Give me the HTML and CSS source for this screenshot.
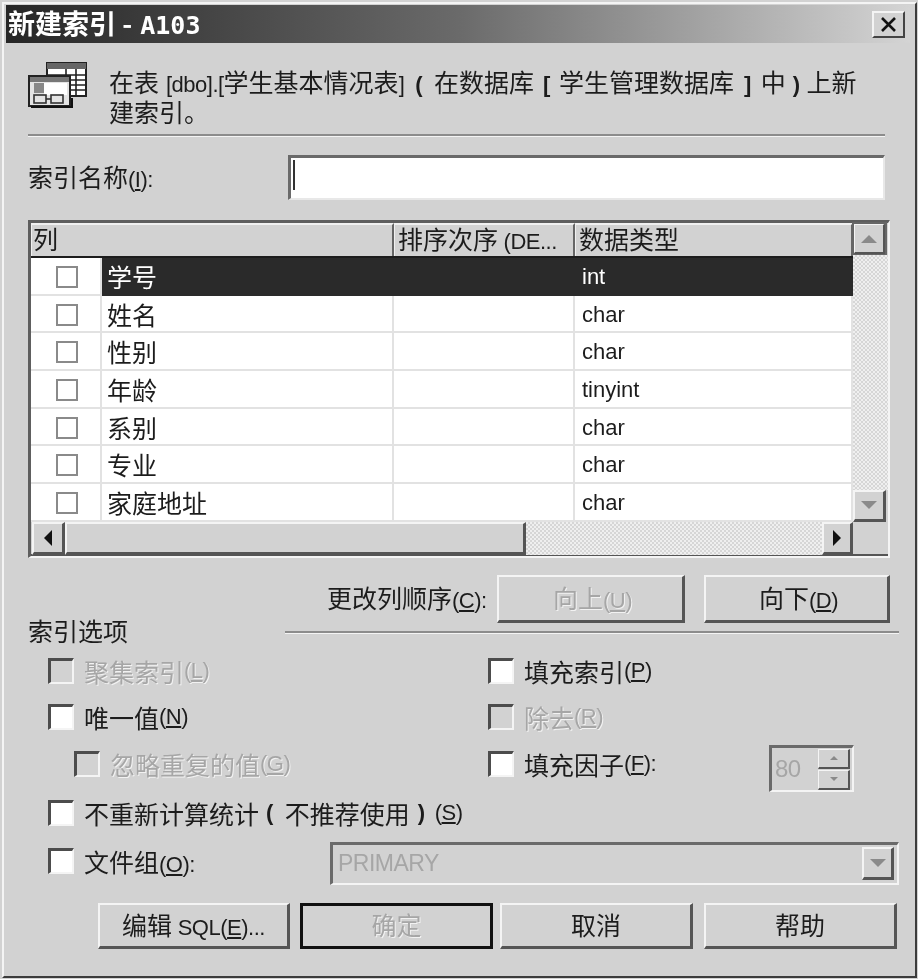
FILE: index.html
```html
<!DOCTYPE html>
<html lang="zh-CN">
<head>
  <meta charset="UTF-8">
  <title>新建索引 - A103</title>
  <link rel="stylesheet" href="styles.css">
</head>
<body>
  <div class="dialog">
    <div class="titlebar">
      <span class="title">新建索引 - <span class="title-mono">A103</span></span>
      <button class="close-btn" aria-label="关闭">
        <svg width="17" height="15" viewBox="0 0 17 15"><path d="M2 1 L15 14 M15 1 L2 14" stroke="#111" stroke-width="2.6" fill="none"/></svg>
      </button>
    </div>

    <div class="content">
      <div class="header">
        <svg class="header-icon" width="60" height="46" viewBox="0 0 60 46">
          <rect x="19" y="1" width="39" height="33" fill="#fff" stroke="#222" stroke-width="2"/>
          <rect x="19" y="1" width="39" height="6" fill="#666"/>
          <path d="M20 13H58M20 18H58M20 23H58M20 28H58M38 7V33M48 7V33" stroke="#222" stroke-width="1.6" fill="none"/>
          <rect x="1" y="14" width="41" height="30" fill="#e4e4e4" stroke="#222" stroke-width="2"/>
          <rect x="2" y="15" width="39" height="5" fill="#777"/>
          <rect x="6" y="21" width="10" height="10" fill="#888"/>
          <rect x="16" y="21" width="23" height="12" fill="#fff"/>
          <rect x="6" y="33" width="12" height="8" fill="none" stroke="#333" stroke-width="1.6"/>
          <rect x="23" y="33" width="12" height="8" fill="none" stroke="#333" stroke-width="1.6"/>
          <path d="M18 37H23" stroke="#333" stroke-width="1.6"/>
          <path d="M3 45H44V36" stroke="#111" stroke-width="2" fill="none"/>
        </svg>
        <p class="header-text">在表 <span class="lt">[dbo].[</span>学生基本情况表<span class="lt">]</span><span class="lt pn pn-a">(</span>在数据库<span class="lt pn pn-b">[</span>学生管理数据库<span class="lt pn pn-c">]</span>中<span class="lt pn pn-d">)</span>上新<br>建索引。</p>
      </div>
      <div class="divider"></div>

      <div class="name-row">
        <label class="name-label">索引名称<span class="lt">(<u>I</u>):</span></label>
        <div class="name-input"><span class="caret"></span></div>
      </div>

      <div class="grid-frame">
        <div class="grid-inner">
          <div class="grid-main">
            <div class="table">
              <div class="table-head">
                <div class="th th-wide">列</div>
                <div class="th">排序次序 <span class="lt">(DE...</span></div>
                <div class="th">数据类型</div>
              </div>
              <div class="table-row selected">
                <div class="td td-check"><span class="cell-box"></span></div>
                <div class="td">学号</div>
                <div class="td"></div>
                <div class="td lt">int</div>
              </div>
              <div class="table-row">
                <div class="td td-check"><span class="cell-box"></span></div>
                <div class="td">姓名</div>
                <div class="td"></div>
                <div class="td lt">char</div>
              </div>
              <div class="table-row">
                <div class="td td-check"><span class="cell-box"></span></div>
                <div class="td">性别</div>
                <div class="td"></div>
                <div class="td lt">char</div>
              </div>
              <div class="table-row">
                <div class="td td-check"><span class="cell-box"></span></div>
                <div class="td">年龄</div>
                <div class="td"></div>
                <div class="td lt">tinyint</div>
              </div>
              <div class="table-row">
                <div class="td td-check"><span class="cell-box"></span></div>
                <div class="td">系别</div>
                <div class="td"></div>
                <div class="td lt">char</div>
              </div>
              <div class="table-row">
                <div class="td td-check"><span class="cell-box"></span></div>
                <div class="td">专业</div>
                <div class="td"></div>
                <div class="td lt">char</div>
              </div>
              <div class="table-row">
                <div class="td td-check"><span class="cell-box"></span></div>
                <div class="td">家庭地址</div>
                <div class="td"></div>
                <div class="td lt">char</div>
              </div>
            </div>
            <div class="vscroll">
              <div class="scroll-btn scroll-up"><span class="arrow arrow-up arrow-off"></span></div>
              <div class="scroll-track"></div>
              <div class="scroll-btn scroll-down"><span class="arrow arrow-down arrow-off"></span></div>
            </div>
          </div>
          <div class="hscroll">
            <div class="scroll-btn scroll-left"><span class="arrow arrow-left"></span></div>
            <div class="scroll-thumb"></div>
            <div class="scroll-track"></div>
            <div class="scroll-btn scroll-right"><span class="arrow arrow-right"></span></div>
          </div>
        </div>
      </div>

      <div class="order-row">
        <span class="order-label">更改列顺序<span class="lt">(<u>C</u>):</span></span>
        <button class="btn btn-order disabled">向上<span class="lt">(<u>U</u>)</span></button>
        <button class="btn btn-order btn-down">向下<span class="lt">(<u>D</u>)</span></button>
      </div>

      <div class="legend">
        <span class="legend-text">索引选项</span>
        <div class="legend-line"></div>
      </div>

      <div class="options">
        <div class="opt disabled"><span class="check"></span>聚集索引<span class="lt">(<u>L</u>)</span></div>
        <div class="opt opt-right"><span class="check on"></span>填充索引<span class="lt">(<u>P</u>)</span></div>

        <div class="opt"><span class="check on"></span>唯一值<span class="lt">(<u>N</u>)</span></div>
        <div class="opt opt-right disabled"><span class="check"></span>除去<span class="lt">(<u>R</u>)</span></div>

        <div class="opt opt-sub disabled"><span class="check"></span>忽略重复的值<span class="lt">(<u>G</u>)</span></div>
        <div class="opt opt-right">
          <span class="check on"></span>填充因子<span class="lt">(<u>F</u>):</span>
          <div class="spinner">
            <span class="spinner-value lt">80</span>
            <div class="spinner-btns">
              <div class="spin-btn"><span class="arrow arrow-up arrow-tiny"></span></div>
              <div class="spin-btn"><span class="arrow arrow-down arrow-tiny"></span></div>
            </div>
          </div>
        </div>

        <div class="opt opt-full"><span class="check on"></span>不重新计算统计<span class="lt pn pn-e">(</span>不推荐使用<span class="lt pn pn-f">)</span><span class="lt">(<u>S</u>)</span></div>

        <div class="opt opt-full">
          <span class="check on"></span><span class="group-label">文件组<span class="lt">(<u>O</u>):</span></span>
          <div class="select">
            <span class="select-value lt">PRIMARY</span>
            <div class="scroll-btn select-btn"><span class="arrow arrow-down arrow-off"></span></div>
          </div>
        </div>
      </div>

      <div class="footer">
        <button class="btn btn-sql">编辑 <span class="lt">SQL(<u>E</u>)...</span></button>
        <button class="btn btn-ok disabled">确定</button>
        <button class="btn btn-cancel">取消</button>
        <button class="btn btn-help">帮助</button>
      </div>
    </div>
  </div>
</body>
</html>
```

FILE: styles.css
```css
/* Base styles */
* {
  margin: 0;
  padding: 0;
  box-sizing: border-box;
  font-family: "Noto Sans CJK SC", "Liberation Sans", sans-serif;
}

html, body {
  width: 918px;
  height: 979px;
  overflow: hidden;
}

body {
  background-color: #d2d2d2;
  color: #1c1c1c;
  font-size: 25px;
  padding: 2px 1px 1px 2px;
}

.lt {
  font-family: "Liberation Sans", sans-serif;
  font-size: 22px;
  letter-spacing: -0.5px;
}

u {
  font-family: "Liberation Sans", sans-serif;
}

/* Bold narrow brackets in running text */
.pn {
  font-weight: 700;
}

.pn-a {
  padding: 0 12px 0 11px;
}

.pn-b {
  padding: 0 9px;
}

.pn-c {
  padding: 0 10px;
}

.pn-d {
  padding: 0 7px;
}

.pn-e {
  padding: 0 12px 0 7px;
}

.pn-f {
  padding: 0 10px 0 8px;
}

/* Window */
.dialog {
  height: 976px;
  padding: 1px 5px 0 2px;
  background-color: #d2d2d2;
  border-style: solid;
  border-width: 2px;
  border-color: #f4f4f4 #3c3c3c #3c3c3c #f4f4f4;
  filter: blur(0.45px);
}

.titlebar {
  display: flex;
  align-items: center;
  height: 38px;
  padding: 0 5px 0 2px;
  background: linear-gradient(to right, #262626 0%, #6a6a6a 50%, #d4d4d4 100%);
}

.title {
  color: #fff;
  font-size: 27px;
  font-weight: 700;
  line-height: 38px;
  white-space: nowrap;
}

.title-mono {
  margin-left: 2px;
  font-family: "DejaVu Sans Mono", monospace;
  font-size: 25px;
  font-weight: 700;
}

.close-btn {
  display: flex;
  align-items: center;
  justify-content: center;
  width: 33px;
  height: 27px;
  margin-left: auto;
  background-color: #d2d2d2;
  border-style: solid;
  border-width: 2px;
  border-color: #f4f4f4 #444 #444 #f4f4f4;
}

.content {
  padding: 19px 11px 0 22px;
}

/* Header */
.header {
  display: flex;
  height: 72px;
}

.header-icon {
  flex: none;
  margin-right: 21px;
}

.header-text {
  padding-top: 7px;
  font-family: "Liberation Sans", "Noto Sans CJK SC", sans-serif;
  line-height: 28px;
  white-space: nowrap;
}

.divider {
  width: 857px;
  height: 2px;
  background-color: #8c8c8c;
  box-shadow: 0 1px 0 #f4f4f4;
}

.name-row {
  display: flex;
  align-items: center;
  height: 45px;
  margin-top: 19px;
}

.name-label {
  width: 260px;
  padding-bottom: 4px;
}

.name-input {
  width: 597px;
  height: 45px;
  padding: 2px;
  background-color: #fff;
  border-style: solid;
  border-width: 3px 2px 2px 3px;
  border-color: #6a6a6a #e8e8e8 #e8e8e8 #6a6a6a;
}

.caret {
  display: block;
  width: 2px;
  height: 30px;
  background-color: #333;
}

/* Column grid */
.grid-frame {
  width: 862px;
  height: 338px;
  margin-top: 20px;
  border-style: solid;
  border-width: 3px 2px 2px 3px;
  border-color: #5e5e5e #f4f4f4 #f4f4f4 #5e5e5e;
}

.grid-inner {
  height: 100%;
  border-bottom: 2px solid #555;
}

.grid-main {
  display: flex;
}

.table {
  width: 822px;
  background-color: #fff;
}

.table-head {
  display: grid;
  grid-template-columns: 363px 181px 278px;
  height: 35px;
  background-color: #d2d2d2;
  border-bottom: 2px solid #1c1c1c;
}

.th {
  padding-left: 3px;
  line-height: 26px;
  white-space: nowrap;
  border-style: solid;
  border-width: 2px 2px 0 1px;
  border-color: #f0f0f0 #666 transparent #f0f0f0;
}

.th-wide {
  padding-left: 1px;
}

.table-row {
  display: grid;
  grid-template-columns: 71px 292px 181px 278px;
  grid-template-rows: 37.7px;
  height: 37.7px;
}

.td {
  padding-left: 5px;
  line-height: 36px;
  border-right: 2px solid #e2e2e2;
  border-bottom: 2px solid #e2e2e2;
}

.td.lt {
  padding-left: 7px;
  letter-spacing: 0;
  line-height: 37px;
}

.td-check {
  display: flex;
  align-items: center;
  justify-content: center;
  padding-left: 0;
}

.cell-box {
  width: 22px;
  height: 22px;
  margin: 2px 0 0 2px;
  background-color: #fff;
  border: 2px solid #8a8a8a;
}

.selected .td {
  color: #fff;
  background-color: #2a2a2a;
  border-color: #2a2a2a;
}

.selected .td-check {
  background-color: #fff;
  border-color: #e2e2e2;
}

/* Scrollbars */
.vscroll {
  display: flex;
  flex-direction: column;
  width: 35px;
}

.scroll-track {
  flex: 1;
  background-color: #efefef;
  background-image: conic-gradient(#d6d6d6 25%, transparent 0 50%, #d6d6d6 0 75%, transparent 0);
  background-size: 4px 4px;
}

.scroll-btn {
  display: flex;
  flex: none;
  align-items: center;
  justify-content: center;
  background-color: #d2d2d2;
  border-style: solid;
  border-width: 2px 3px 3px 2px;
  border-color: #f4f4f4 #555 #555 #f4f4f4;
}

.vscroll .scroll-btn {
  width: 33px;
  height: 32px;
}

.scroll-up {
  outline: 2px solid #666;
  outline-offset: -1px;
}

.hscroll {
  display: flex;
  width: 822px;
  height: 33px;
  padding-left: 1px;
}

.hscroll .scroll-btn {
  width: 33px;
}

.hscroll .scroll-right {
  width: 31px;
}

.scroll-thumb {
  flex: none;
  width: 461px;
  background-color: #d2d2d2;
  border-style: solid;
  border-width: 2px 3px 3px 2px;
  border-color: #f4f4f4 #555 #555 #f4f4f4;
}

.arrow {
  display: block;
  width: 0;
  height: 0;
  border-style: solid;
  border-color: transparent;
}

.arrow-up {
  border-width: 0 8px 8px;
  border-bottom-color: #111;
}

.arrow-down {
  border-width: 8px 8px 0;
  border-top-color: #111;
}

.arrow-left {
  border-width: 8px 8px 8px 0;
  border-right-color: #111;
}

.arrow-right {
  border-width: 8px 0 8px 8px;
  border-left-color: #111;
}

.arrow-off.arrow-up {
  border-bottom-color: #8a8a8a;
}

.arrow-off.arrow-down {
  border-top-color: #8a8a8a;
}

.arrow-tiny.arrow-up {
  border-width: 0 4px 4px;
  border-bottom-color: #8a8a8a;
}

.arrow-tiny.arrow-down {
  border-width: 4px 4px 0;
  border-top-color: #8a8a8a;
}

/* Buttons */
.btn {
  padding-bottom: 4px;
  color: #1c1c1c;
  font-size: 25px;
  text-align: center;
  white-space: nowrap;
  background-color: #d2d2d2;
  border-style: solid;
  border-width: 2px 3px 3px 2px;
  border-color: #f4f4f4 #555 #555 #f4f4f4;
}

.order-row {
  display: flex;
  align-items: center;
  width: 862px;
  height: 48px;
  margin-top: 17px;
}

.order-label {
  flex: none;
  width: 170px;
  margin-left: 299px;
  padding-bottom: 5px;
  white-space: nowrap;
}

.btn-order {
  flex: none;
  width: 188px;
  height: 48px;
  padding-left: 4px;
}

.btn-down {
  width: 186px;
  margin-left: 19px;
}

.disabled,
.disabled .lt {
  color: #a6a6a6;
  text-shadow: 1px 1px 0 #f2f2f2;
}

.legend {
  display: flex;
  align-items: center;
  height: 18px;
}

.legend-text {
  margin-bottom: 4px;
  line-height: 18px;
}

.legend-line {
  flex: 1;
  height: 2px;
  margin-left: 157px;
  background-color: #8c8c8c;
  box-shadow: 0 1px 0 #f4f4f4;
}

/* Index options */
.options {
  display: grid;
  grid-template-columns: 460px 1fr;
  grid-template-rows: 46px 45px 49px 49px 48px;
  margin-top: 9px;
}

.opt {
  display: flex;
  align-items: center;
  padding-left: 20px;
  padding-bottom: 4px;
  white-space: nowrap;
}

.opt-right {
  padding-left: 0;
}

.opt-sub {
  padding-left: 46px;
}

.opt-full {
  grid-column: 1 / 3;
}

.check {
  flex: none;
  width: 26px;
  height: 26px;
  margin-right: 10px;
  border-style: solid;
  border-width: 3px 2px 2px 3px;
  border-color: #4c4c4c #f4f4f4 #f4f4f4 #4c4c4c;
}

.check.on {
  background-color: #fff;
}

.spinner {
  display: flex;
  align-items: center;
  justify-content: space-between;
  width: 85px;
  height: 47px;
  margin: 10px 45px 0 auto;
  padding: 0 2px 0 3px;
  border-style: solid;
  border-width: 3px 2px 2px 3px;
  border-color: #6a6a6a #f4f4f4 #f4f4f4 #6a6a6a;
}

.spinner-value {
  color: #a6a6a6;
  font-size: 24px;
}

.spinner-btns {
  display: flex;
  flex-direction: column;
  gap: 1px;
  width: 32px;
}

.spin-btn {
  display: flex;
  align-items: center;
  justify-content: center;
  height: 20px;
  border-style: solid;
  border-width: 1px 2px 2px 1px;
  border-color: #f4f4f4 #555 #555 #f4f4f4;
}

.group-label {
  width: 246px;
}

.select {
  display: flex;
  align-items: center;
  flex: 1;
  height: 43px;
  margin-top: 4px;
  padding: 0 3px 0 5px;
  border-style: solid;
  border-width: 3px 2px 2px 3px;
  border-color: #6a6a6a #f4f4f4 #f4f4f4 #6a6a6a;
}

.select-value {
  color: #a6a6a6;
  font-size: 23px;
}

.select-btn {
  width: 32px;
  height: 33px;
  margin-left: auto;
}

.footer {
  display: flex;
  gap: 7px;
  height: 46px;
  margin-top: 16px;
  padding-left: 70px;
}

.footer .btn {
  width: 193px;
}

.footer .btn-sql {
  flex: none;
  width: 192px;
}

.footer .btn-ok {
  margin-left: 3px;
  border-color: #111;
  border-width: 3px;
}

.btn-help {
  margin-left: 4px;
}
```
